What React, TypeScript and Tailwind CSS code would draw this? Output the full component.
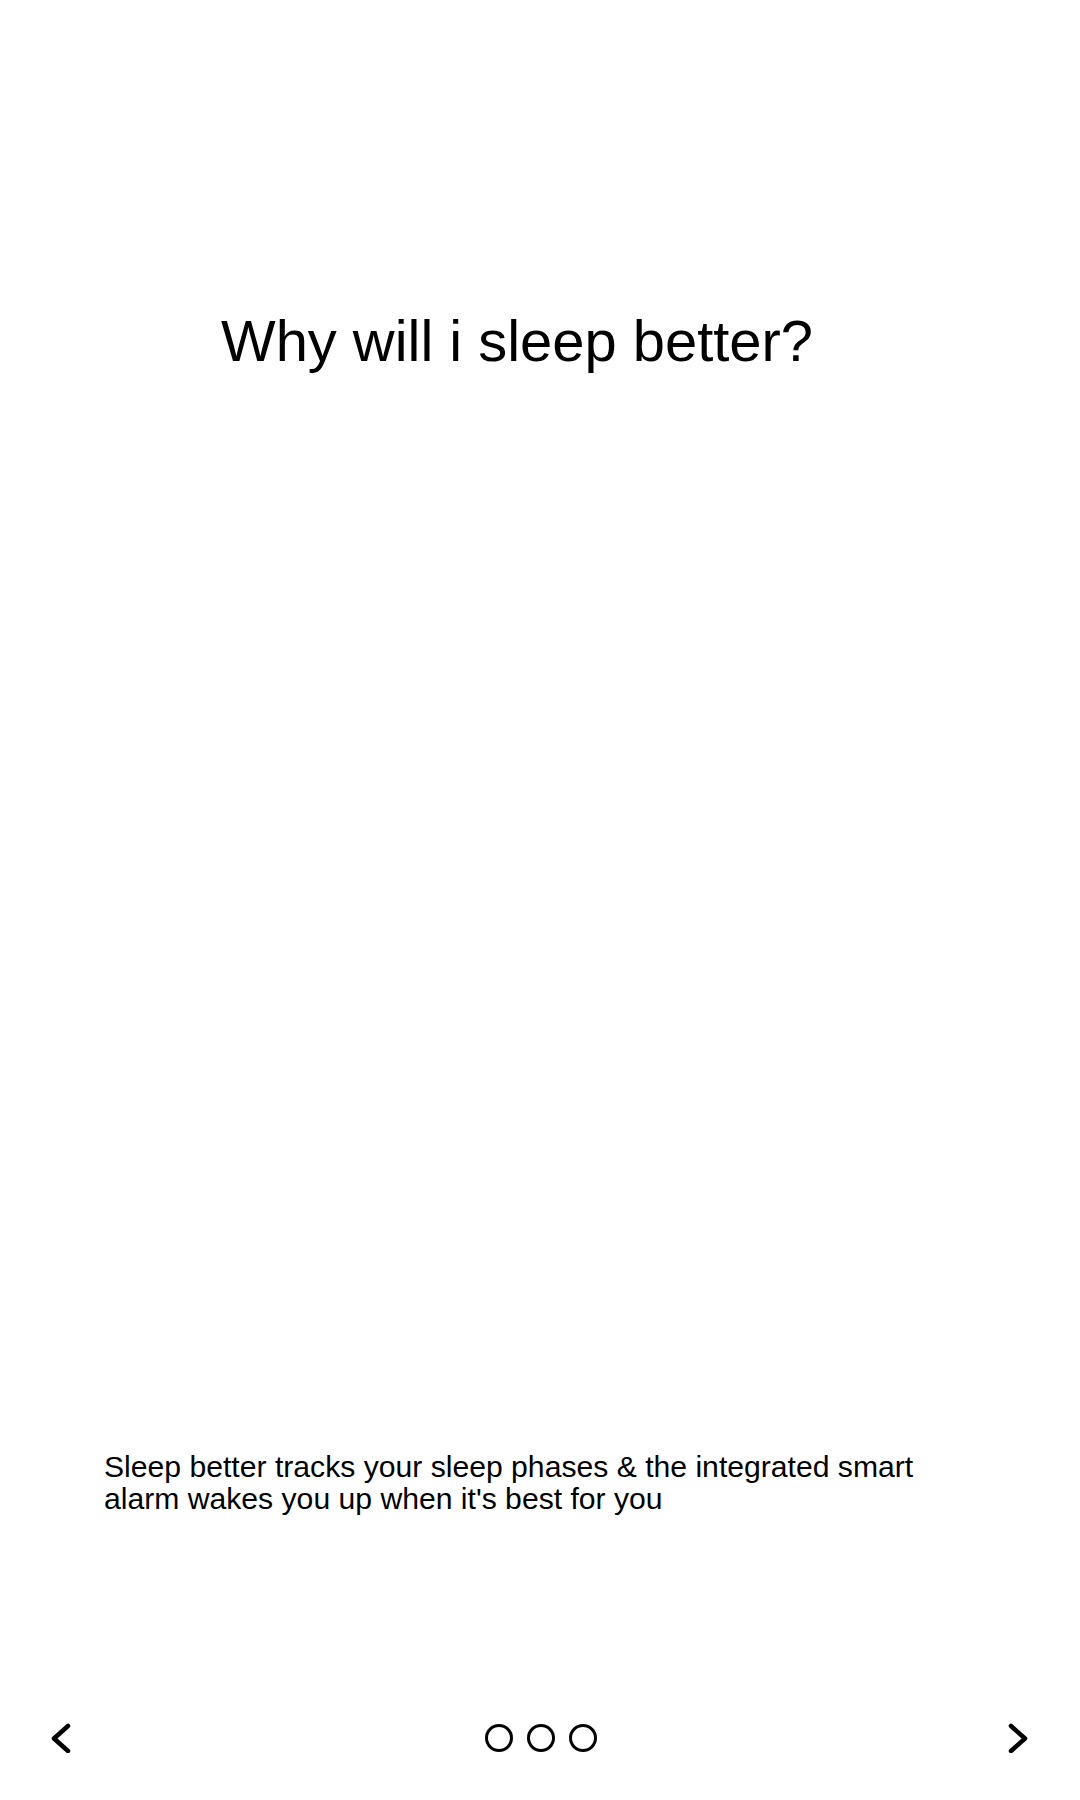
const Chevron = ({ dir }: { dir: "left" | "right" }) => (
  <svg width="22" height="30" viewBox="0 0 22 30" fill="none">
    <path
      d={dir === "left" ? "M18 3 L4 15.5 L18 28" : "M4 3 L18 15.5 L4 28"}
      stroke="#000"
      strokeWidth="4.5"
      strokeLinecap="round"
      strokeLinejoin="round"
    />
  </svg>
);

const App = () => {
  return (
    <div className="w-[1080px] h-[1800px] bg-white text-black flex flex-col font-['Liberation_Sans',Arial,sans-serif]">
      <h1 className="mt-[313px] pl-[221px] text-[57.9px] leading-none font-normal">
        Why will i sleep better?
      </h1>

      <p className="mt-[1080px] px-[104px] text-[30.15px] leading-[32.5px]">
        Sleep better tracks your sleep phases &amp; the integrated smart alarm
        wakes you up when it's best for you
      </p>

      <nav className="mt-auto mb-[42px] h-[40px] flex items-center justify-between pl-[50px] pr-[51px]">
        <button className="flex items-center">
          <Chevron dir="left" />
        </button>
        <div className="flex items-center gap-[14px] pl-[3px]">
          <span className="w-[28px] h-[28px] rounded-full border-[3px] border-black" />
          <span className="w-[28px] h-[28px] rounded-full border-[3px] border-black" />
          <span className="w-[28px] h-[28px] rounded-full border-[3px] border-black" />
        </div>
        <button className="flex items-center">
          <Chevron dir="right" />
        </button>
      </nav>
    </div>
  );
};

export default App;
